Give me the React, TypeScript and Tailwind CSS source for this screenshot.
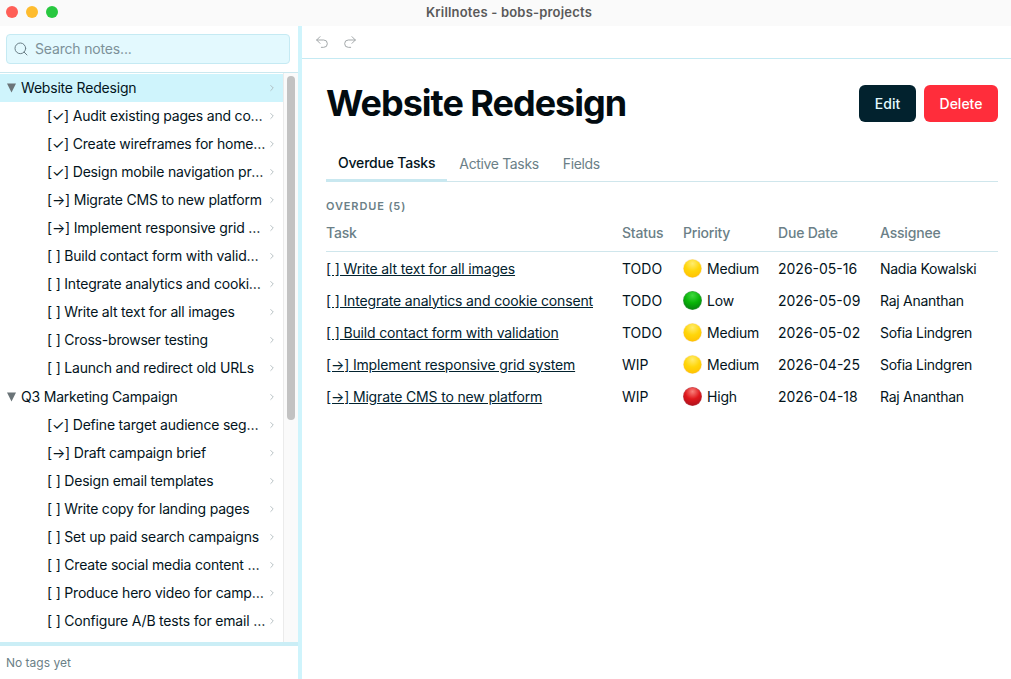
import React from 'react'
import { ChevronRight, Redo2, Search, Undo2 } from 'lucide-react'

interface TreeGroup {
  title: string
  selected?: boolean
  items: string[]
}

interface OverdueTask {
  task: string
  status: string
  priority: 'Low' | 'Medium' | 'High'
  due: string
  assignee: string
}

const TREE: TreeGroup[] = [
  {
    title: 'Website Redesign',
    selected: true,
    items: [
      '[✓] Audit existing pages and content',
      '[✓] Create wireframes for homepage',
      '[✓] Design mobile navigation prototype',
      '[→] Migrate CMS to new platform',
      '[→] Implement responsive grid system',
      '[ ] Build contact form with validation',
      '[ ] Integrate analytics and cookie consent',
      '[ ] Write alt text for all images',
      '[ ] Cross-browser testing',
      '[ ] Launch and redirect old URLs',
    ],
  },
  {
    title: 'Q3 Marketing Campaign',
    items: [
      '[✓] Define target audience segments',
      '[→] Draft campaign brief',
      '[ ] Design email templates',
      '[ ] Write copy for landing pages',
      '[ ] Set up paid search campaigns',
      '[ ] Create social media content calendar',
      '[ ] Produce hero video for campaign launch',
      '[ ] Configure A/B tests for email subject lines',
      '[ ] Review campaign metrics',
    ],
  },
]

const TASKS: OverdueTask[] = [
  { task: '[ ] Write alt text for all images', status: 'TODO', priority: 'Medium', due: '2026-05-16', assignee: 'Nadia Kowalski' },
  { task: '[ ] Integrate analytics and cookie consent', status: 'TODO', priority: 'Low', due: '2026-05-09', assignee: 'Raj Ananthan' },
  { task: '[ ] Build contact form with validation', status: 'TODO', priority: 'Medium', due: '2026-05-02', assignee: 'Sofia Lindgren' },
  { task: '[→] Implement responsive grid system', status: 'WIP', priority: 'Medium', due: '2026-04-25', assignee: 'Sofia Lindgren' },
  { task: '[→] Migrate CMS to new platform', status: 'WIP', priority: 'High', due: '2026-04-18', assignee: 'Raj Ananthan' },
]

const PRIORITY_COLOURS = {
  Low: { id: 'dot-low', light: '#3fd83f', mid: '#08b408', dark: '#067a10', rim: '#0a7a14' },
  Medium: { id: 'dot-medium', light: '#ffec6e', mid: '#ffd60a', dark: '#ffbe00', rim: '#f6d9a8' },
  High: { id: 'dot-high', light: '#f8807a', mid: '#e0181c', dark: '#a8101c', rim: '#a8101c' },
}

const PriorityDot: React.FC<{ priority: OverdueTask['priority'] }> = ({ priority }) => {
  const c = PRIORITY_COLOURS[priority]
  return (
    <svg width="19" height="19" viewBox="0 0 19 19" className="shrink-0">
      <defs>
        <radialGradient id={c.id} cx="50%" cy="22%" r="85%">
          <stop offset="0%" stopColor={c.light} />
          <stop offset="50%" stopColor={c.mid} />
          <stop offset="100%" stopColor={c.dark} />
        </radialGradient>
      </defs>
      <circle cx="9.5" cy="9.5" r="9.5" fill={c.rim} opacity="0.7" />
      <circle cx="9.5" cy="9.5" r="8.9" fill={`url(#${c.id})`} />
    </svg>
  )
}

const TreeRow: React.FC<{ label: string; root?: boolean; selected?: boolean }> = ({ label, root, selected }) => (
  <div className={`flex h-7 shrink-0 items-center pr-[6px] ${selected ? 'bg-[#cff4fc]' : ''} ${root ? 'pl-[7px]' : 'pl-[47px]'}`}>
    {root && (
      <svg width="9" height="10" viewBox="0 0 9 10" className="mr-[5px] shrink-0">
        <polygon points="0,0.5 9,0.5 4.5,9.5" fill="#6b7478" />
      </svg>
    )}
    <span className="min-w-0 flex-1 truncate text-sm tracking-[-0.014em] text-[#03141c]">{label}</span>
    <ChevronRight size={10} strokeWidth={2} className="ml-px shrink-0 text-[#a9b4b8]" />
  </div>
)

const Sidebar: React.FC = () => (
  <aside className="flex w-[298px] shrink-0 flex-col bg-white">
    <div className="border-b border-[#cbe8ef] pt-2 pr-2 pb-2 pl-[6px]">
      <div className="flex h-[30px] items-center rounded border border-[#c5eaf3] bg-[#e3f9fe] pl-[6px]">
        <Search size={16} strokeWidth={1.5} className="text-[#6b7f87]" />
        <span className="ml-[6px] text-sm tracking-[-0.012em] text-[#7d9199]">Search notes...</span>
      </div>
    </div>
    <div className="flex min-h-0 flex-1">
      <div className="flex min-w-0 flex-1 flex-col gap-px overflow-hidden pt-px">
        {TREE.map(group => (
          <div key={group.title} className="flex shrink-0 flex-col">
            <TreeRow label={group.title} root selected={group.selected} />
            {group.items.map(item => (
              <TreeRow key={item} label={item} />
            ))}
          </div>
        ))}
      </div>
      <div className="w-[15px] shrink-0 border-l border-[#ebebeb] bg-[#fafafa] pt-[3px] pl-[3px]">
        <div className="h-[344px] w-2 rounded bg-[#c2c2c2]" />
      </div>
    </div>
    <div className="h-[4px] shrink-0 bg-[#cbeef6]" />
    <div className="flex h-[33px] shrink-0 items-center px-[6px] text-xs text-[#6b7f87]">No tags yet</div>
  </aside>
)

const TabBar: React.FC = () => (
  <div className="mt-[25px] flex h-[34px] border-b border-[#cfe6ec] tracking-[-0.022em]">
    <div className="-mb-px border-b-[3px] border-[#c9e8f0] px-3 pt-[5px] text-sm font-medium tracking-[-0.014em] text-[#03141c]">Overdue Tasks</div>
    <div className="px-3 pt-[6px] text-sm text-[#6b7f87]">Active Tasks</div>
    <div className="px-3 pt-[6px] text-sm text-[#6b7f87]">Fields</div>
  </div>
)

const TaskTable: React.FC = () => (
  <table className="w-full table-fixed border-collapse text-left text-sm tracking-[-0.014em] text-[#03141c]">
    <thead>
      <tr className="h-[34px] border-b border-[#cfe6ec] text-[#6b7f87]">
        <th className="w-[296px] pb-[3px] font-medium">Task</th>
        <th className="w-[61px] pb-[3px] font-medium">Status</th>
        <th className="w-[95px] pb-[3px] font-medium">Priority</th>
        <th className="w-[102px] pb-[3px] font-medium">Due Date</th>
        <th className="pb-[3px] font-medium">Assignee</th>
      </tr>
    </thead>
    <tbody>
      {TASKS.map(row => (
        <tr key={row.task} className="h-8">
          <td className="truncate pt-[2px] tracking-[-0.011em]">
            <a className="text-[#02222e] underline">{row.task}</a>
          </td>
          <td className="pt-[2px] tracking-normal">{row.status}</td>
          <td className="pt-[2px]">
            <span className="flex items-center gap-[5px]">
              <PriorityDot priority={row.priority} />
              {row.priority}
            </span>
          </td>
          <td className="pt-[2px] tracking-normal">{row.due}</td>
          <td className="pt-[2px] tracking-[-0.02em]">{row.assignee}</td>
        </tr>
      ))}
    </tbody>
  </table>
)

export default function App() {
  return (
    <div className="flex h-[679px] w-[1011px] flex-col overflow-hidden bg-white font-['Inter','Noto_Sans_CJK_JP',sans-serif]">
      <header className="relative flex h-[26px] shrink-0 items-center justify-center bg-[#fafafa] pl-[7px]">
        <div className="absolute top-[6px] left-[6px] flex gap-2">
          <span className="size-3 rounded-full bg-[#ff5f57]" />
          <span className="size-3 rounded-full bg-[#febc2e]" />
          <span className="size-3 rounded-full bg-[#28c840]" />
        </div>
        <span className="text-[13px] font-semibold tracking-[0.015em] text-[#595959]">Krillnotes - bobs-projects</span>
      </header>

      <div className="flex min-h-0 flex-1">
        <Sidebar />
        <div className="w-1 shrink-0 bg-[#cff4fc]" />

        <main className="flex min-w-0 flex-1 flex-col">
          <div className="flex h-[33px] shrink-0 items-center gap-3 border-b border-[#c5eaf3] pl-3">
            <Undo2 size={16} strokeWidth={1.5} className="text-[#a3a8aa]" />
            <Redo2 size={16} strokeWidth={1.5} className="text-[#a3a8aa]" />
          </div>

          <div className="pt-6 pr-[13px] pl-6">
            <div className="flex items-center justify-between">
              <h1 className="text-4xl font-bold tracking-[-0.028em] text-[#020b10]">Website Redesign</h1>
              <div className="flex gap-2">
                <button className="h-[37px] w-[57px] rounded-md bg-[#02222e] pt-px text-sm font-medium text-[#e3f9fe]">Edit</button>
                <button className="h-[37px] w-[74px] rounded-md bg-[#ff2d3b] pt-px text-sm font-medium text-white">Delete</button>
              </div>
            </div>

            <TabBar />

            <div className="mt-4 mb-[3px] text-[11px] font-semibold tracking-[0.08em] text-[#6b7f87]">OVERDUE (5)</div>
            <TaskTable />
          </div>
        </main>
      </div>
    </div>
  )
}
